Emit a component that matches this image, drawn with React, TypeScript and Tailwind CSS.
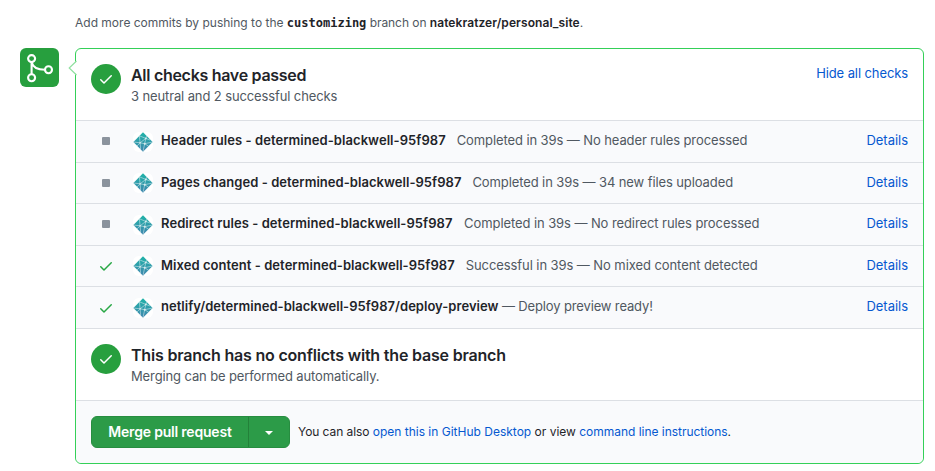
import React from "react";

const checks = [
  { ok: false, h: "h-[42px]", lift: "mb-0.5", title: "Header rules - determined-blackwell-95f987", note: "Completed in 39s — No header rules processed", gap: "ml-[11px]", tt: "tracking-[0.06px]", nt: "tracking-[-0.1px]" },
  { ok: false, h: "h-[41px]", lift: "mb-0", title: "Pages changed - determined-blackwell-95f987", note: "Completed in 39s — 34 new files uploaded", gap: "ml-[11px]", tt: "tracking-[0.045px]", nt: "tracking-[-0.1px]" },
  { ok: false, h: "h-[42px]", lift: "mb-0.5", title: "Redirect rules - determined-blackwell-95f987", note: "Completed in 39s — No redirect rules processed", gap: "ml-[11.5px]", tt: "tracking-[0.07px]", nt: "tracking-[-0.085px]" },
  { ok: true, h: "h-[41px]", lift: "mb-0", title: "Mixed content - determined-blackwell-95f987", note: "Successful in 39s — No mixed content detected", gap: "ml-[11px]", tt: "tracking-[0.055px]", nt: "tracking-[-0.08px]" },
  { ok: true, h: "h-[42px]", lift: "mb-0.5", title: "netlify/determined-blackwell-95f987/deploy-preview", note: "— Deploy preview ready!", gap: "ml-[3.5px]", tt: "tracking-[0.03px]", nt: "tracking-[-0.14px]" },
];

function Check({ className }: { className: string }) {
  return (
    <svg viewBox="0 0 16 16" className={className} fill="currentColor">
      <path d="M13.78 4.22a.75.75 0 010 1.06l-7.25 7.25a.75.75 0 01-1.06 0L2.22 9.28a.75.75 0 011.06-1.06L6 10.94l6.72-6.72a.75.75 0 011.06 0z" />
    </svg>
  );
}

function Netlify() {
  return (
    <svg viewBox="0 0 20 20" className="size-5 shrink-0">
      <defs>
        <linearGradient id="teal" x1="0" y1="0" x2="0" y2="1">
          <stop offset="0" stopColor="#1fb3a8" />
          <stop offset="1" stopColor="#3f86ae" />
        </linearGradient>
      </defs>
      <rect width="20" height="20" rx="6" fill="#fff" />
      <path d="M10 .2 19.6 10 10 19.8.4 10Z" fill="url(#teal)" />
      <path d="M6.4 3.8 12.8 6.4 17 8M12.8 6.4 11.7 11.7 9.9 20M12.8 6.4 14 4M.4 10 7.1 10.8 11.7 11.7 19.6 10M4 14 7.1 10.8 12.8 6.4M6.4 3.8 7.1 10.8 7.6 17M11.7 11.7 15.5 14.2" stroke="#cfe6ea" strokeWidth=".6" fill="none" />
      <circle cx="12.8" cy="6.4" r=".9" fill="#d5ecef" />
      <circle cx="11.7" cy="11.7" r="1" fill="#d5ecef" />
      <circle cx="7.1" cy="10.8" r=".8" fill="#d5ecef" />
    </svg>
  );
}

function Status({ title, note, titleClass, noteClass }: { title: string; note: string; titleClass: string; noteClass: string }) {
  return (
    <div className="flex">
      <div className="flex size-[30px] shrink-0 items-center justify-center rounded-full bg-[#279f3e] text-white">
        <Check className="size-4" />
      </div>
      <div className="ml-[10px]">
        <h3 className={"text-[16px] leading-6 font-semibold " + titleClass}>{title}</h3>
        <p className={"text-[13px] leading-[19px] text-[#505861] " + noteClass}>{note}</p>
      </div>
    </div>
  );
}

export default function App() {
  return (
    <div className="h-[471px] w-[935px] overflow-hidden bg-white font-['Inter','Liberation_Sans',sans-serif] text-[13px] whitespace-nowrap text-[#1f2429]">
      <p className="flex h-12 pt-[14px] pl-[75px] text-[12px] leading-[18px] whitespace-pre text-[#505861]">
        <span>Add more commits by pushing to the </span>
        <b className="font-['DejaVu_Sans_Mono',monospace] text-[12px] text-[#1f2429]">customizing</b>
        <span className="tracking-[-0.06px]"> branch on </span>
        <b className="font-semibold tracking-[0.08px] text-[#1f2429]">natekratzer/personal_site</b>
        <span>.</span>
      </p>
      <div className="flex pl-5">
        <div className="flex size-[39px] shrink-0 items-center justify-center rounded-md bg-[#279f3e]">
          <svg viewBox="0 0 39 39" className="size-[39px]" fill="none" stroke="#fff" strokeWidth="2.1">
            <circle cx="11.6" cy="10.6" r="3.5" />
            <circle cx="11.6" cy="29.8" r="3.5" />
            <circle cx="28.5" cy="21.7" r="3.5" />
            <path d="M11.6 14.2v12M11.6 14.2c1.2 4.8 5 7.5 13.3 7.5" />
          </svg>
        </div>
        <div className="relative ml-4 h-[416px] w-[849px] rounded-md border border-[#34d058] bg-white">
          <svg viewBox="0 0 9 16" className="absolute top-[11px] -left-[8px] h-4 w-[9px]">
            <path d="M9 .8 1 8l8 7.2Z" fill="#fff" />
            <path d="M8.5 1 1.2 8l7.3 7" fill="none" stroke="#92e0a2" strokeWidth="1.2" />
          </svg>
          <div className="flex h-[72px] items-start justify-between border-b border-[#dcdfe4] px-[15px] pt-[15px]">
            <Status title="All checks have passed" note="3 neutral and 2 successful checks" titleClass="-mt-[1px] tracking-[-0.29px]" noteClass="tracking-[-0.12px]" />
            <a className="leading-[19px] tracking-[-0.1px] text-[#0558d0]">Hide all checks</a>
          </div>
          {checks.map((c) => (
            <div key={c.title} className={"flex items-center border-b border-[#dcdfe4] bg-[#f9fafc] pr-[15px] pl-[22px] " + c.h}>
              <span className="flex w-4 items-center justify-center text-[#28a745]">
                {c.ok ? <Check className="size-4" /> : <i className={"size-2 rounded-[1px] bg-[#8b939d] " + c.lift} />}
              </span>
              <span className="mr-2 ml-[19px]"><Netlify /></span>
              <b className={"font-semibold " + c.tt + " " + c.lift}>{c.title}</b>
              <span className={"text-[#505861] " + c.gap + " " + c.nt + " " + c.lift}>{c.note}</span>
              <a className={"ml-auto tracking-[-0.03px] text-[#0558d0] " + c.lift}>Details</a>
            </div>
          ))}
          <div className="h-[72px] border-b border-[#dcdfe4] px-[15px] pt-[15px]">
            <Status title="This branch has no conflicts with the base branch" note="Merging can be performed automatically." titleClass="-mt-[1px] tracking-[-0.19px]" noteClass="tracking-[-0.12px]" />
          </div>
          <div className="flex h-[62px] items-center rounded-b-md bg-[#f9fafc] px-[15px]">
            <button className="flex h-8 w-[199px] rounded-md border border-[#278d40] bg-[#2c9b48] text-[14px] font-semibold text-white">
              <span className="flex h-full w-[157px] items-center justify-center border-r border-[#238139] pb-0.5 tracking-[-0.2px]">Merge pull request</span>
              <span className="flex h-full flex-1 items-center justify-center">
                <i className="mt-[2px] border-x-4 border-t-4 border-x-transparent border-t-white" />
              </span>
            </button>
            <p className="ml-2 text-[12px] whitespace-pre">
              <span className="tracking-[-0.07px]">You can also </span>
              <a className="text-[#0558d0]">open this in GitHub Desktop</a>
              <span> or view </span>
              <a className="tracking-[-0.03px] text-[#0558d0]">command line instructions</a>.
            </p>
          </div>
        </div>
      </div>
    </div>
  );
}
